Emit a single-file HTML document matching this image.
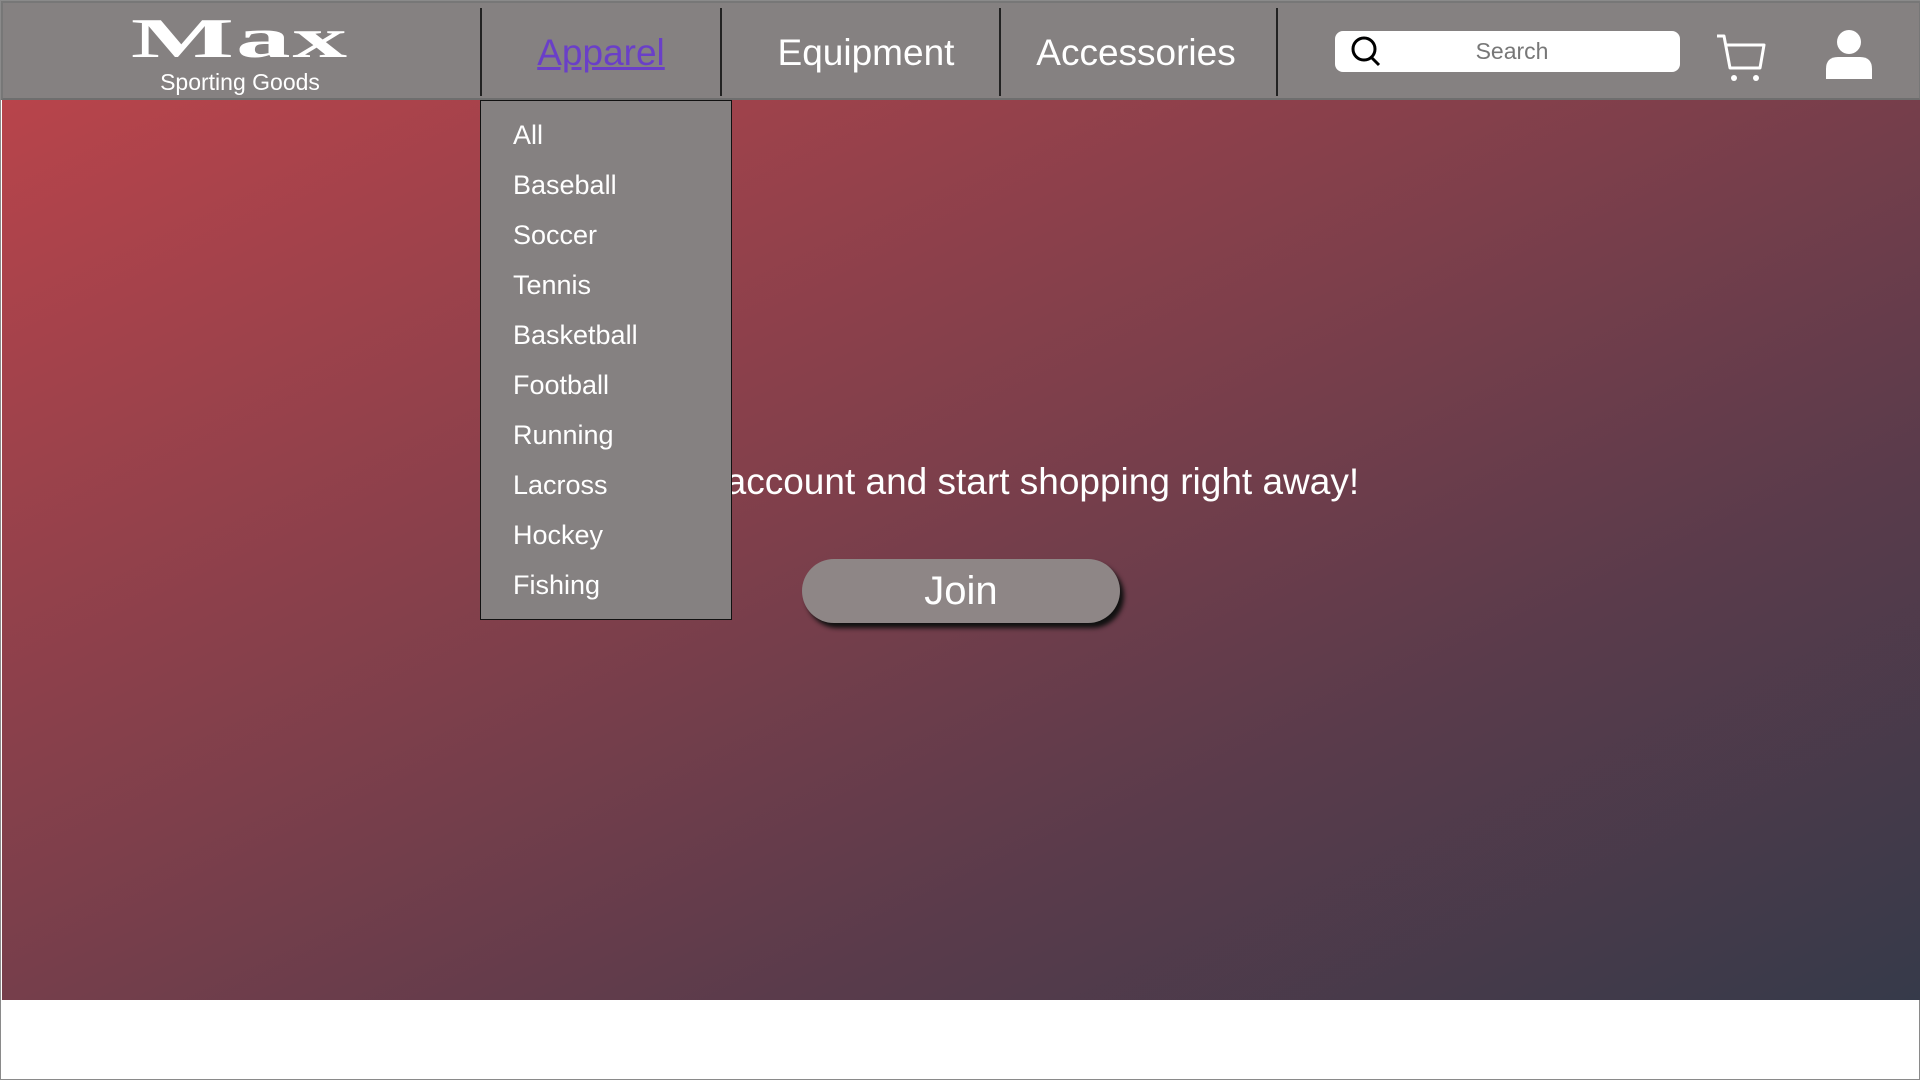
<!DOCTYPE html>
<html><head><meta charset="utf-8"><style>
*{margin:0;padding:0;box-sizing:border-box}
body{width:1920px;height:1080px;background:#fff;position:relative;overflow:hidden;font-family:"Liberation Sans",sans-serif;border:1px solid #8a8a8a}
#hdr{position:absolute;left:0;top:0;width:1920px;height:99px;background:#858181;border:2px solid #777;border-bottom:2px solid #6e6e6e}
.sep{position:absolute;top:5px;width:2px;height:88px;background:#222}
.nav{position:absolute;top:29px;font-size:37px;color:#fff;transform:translateX(-50%);white-space:nowrap}
#hero{position:absolute;left:1px;top:99px;width:1918px;height:900px;background:linear-gradient(to bottom right,#b8444b 0%,#7d3f4b 45%,#5a3b4b 70%,#363a4a 100%)}
#dd{position:absolute;left:479px;top:99px;width:252px;height:520px;background:#858181;border:1.5px solid #111}
#dd div{position:absolute;left:32px;font-size:27px;color:#fff}
</style></head><body>
<div id="hero"></div>
<div id="hdr">
 <div style="position:absolute;left:237px;top:4px;transform:translateX(-50%) scaleX(1.95);font-family:'Liberation Serif',serif;font-weight:bold;font-size:56px;color:#fff;letter-spacing:1px">Max</div>
 <div style="position:absolute;left:237px;top:66px;transform:translateX(-50%);font-size:23px;color:#fff;white-space:nowrap">Sporting Goods</div>
 <div class="sep" style="left:477px"></div>
 <div class="sep" style="left:717px"></div>
 <div class="sep" style="left:996px"></div>
 <div class="sep" style="left:1273px"></div>
 <div class="nav" style="left:598px;color:#6a3fc8;text-decoration:underline">Apparel</div>
 <div class="nav" style="left:863px">Equipment</div>
 <div class="nav" style="left:1133px">Accessories</div>
 <div style="position:absolute;left:1332px;top:28px;width:345px;height:41px;background:#fff;border-radius:8px">
  <svg style="position:absolute;left:14px;top:4px" width="36" height="34" viewBox="0 0 36 34"><circle cx="15" cy="14" r="11" fill="none" stroke="#000" stroke-width="3"/><line x1="22" y1="22" x2="30" y2="30" stroke="#000" stroke-width="3"/></svg>
  <div style="position:absolute;left:177px;top:7px;transform:translateX(-50%);font-size:23px;color:#777">Search</div>
 </div>
 <svg style="position:absolute;left:1711px;top:30px" width="58" height="50" viewBox="0 0 58 50"><path d="M3 3 H10 L16 35 H46 L50 12 H12" fill="none" stroke="#fff" stroke-width="3" stroke-linejoin="round"/><circle cx="20" cy="45" r="3" fill="#fff"/><circle cx="42" cy="45" r="3" fill="#fff"/></svg>
 <svg style="position:absolute;left:1821px;top:26px" width="50" height="52" viewBox="0 0 50 52"><circle cx="25" cy="13" r="12" fill="#fff"/><path d="M2 50 V40 Q2 28 14 28 H36 Q48 28 48 40 V50 Z" fill="#fff"/></svg>
</div>
<div style="position:absolute;left:955px;top:460px;transform:translateX(-50%);font-size:37px;color:#fff;white-space:nowrap">Create an account and start shopping right away!</div>
<div style="position:absolute;left:801px;top:558px;width:318px;height:64px;background:#8e8686;border-radius:32px;box-shadow:4px 5px 5px #111;color:#fff;font-size:40px;text-align:center;line-height:64px">Join</div>
<div id="dd">
 <div style="top:19px">All</div>
 <div style="top:69px">Baseball</div>
 <div style="top:119px">Soccer</div>
 <div style="top:169px">Tennis</div>
 <div style="top:219px">Basketball</div>
 <div style="top:269px">Football</div>
 <div style="top:319px">Running</div>
 <div style="top:369px">Lacross</div>
 <div style="top:419px">Hockey</div>
 <div style="top:469px">Fishing</div>
</div>
</body></html>
